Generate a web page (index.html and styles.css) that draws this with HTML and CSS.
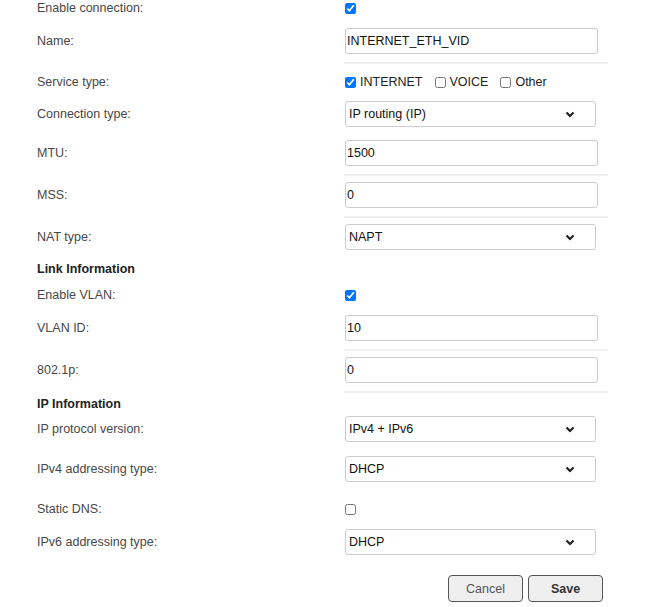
FILE: index.html
```html
<!DOCTYPE html>
<html>
<head>
<meta charset="utf-8">
<link rel="stylesheet" href="styles.css">
</head>
<body>
<form class="form">
  <div class="row row-check">
    <span class="label">Enable connection:</span>
    <div class="field"><input type="checkbox" class="cb" checked></div>
  </div>
  <div class="row row-text mt-14">
    <span class="label">Name:</span>
    <div class="field field-line"><input type="text" class="input" value="INTERNET_ETH_VID"></div>
  </div>
  <div class="row row-line mt-10">
    <span class="label">Service type:</span>
    <div class="field options">
      <label class="opt"><input type="checkbox" class="cb" checked><span>INTERNET</span></label>
      <label class="opt"><input type="checkbox" class="cb"><span>VOICE</span></label>
      <label class="opt"><input type="checkbox" class="cb"><span>Other</span></label>
    </div>
  </div>
  <div class="row row-select mt-11">
    <span class="label">Connection type:</span>
    <div class="field">
      <div class="select-wrap">
        <select class="select"><option>IP routing (IP)</option></select>
        <svg class="chev" width="10" height="7" viewBox="0 0 10 7"><path d="M1.5 1.5 L5 5 L8.5 1.5" fill="none" stroke="#222" stroke-width="2.2"/></svg>
      </div>
    </div>
  </div>
  <div class="row row-text mt-13">
    <span class="label">MTU:</span>
    <div class="field field-line"><input type="text" class="input" value="1500"></div>
  </div>
  <div class="row row-text mt-6">
    <span class="label">MSS:</span>
    <div class="field field-line"><input type="text" class="input" value="0"></div>
  </div>
  <div class="row row-select mt-6">
    <span class="label">NAT type:</span>
    <div class="field">
      <div class="select-wrap">
        <select class="select"><option>NAPT</option></select>
        <svg class="chev" width="10" height="7" viewBox="0 0 10 7"><path d="M1.5 1.5 L5 5 L8.5 1.5" fill="none" stroke="#222" stroke-width="2.2"/></svg>
      </div>
    </div>
  </div>
  <div class="row row-line mt-11">
    <span class="heading">Link Information</span>
  </div>
  <div class="row row-check mt-10">
    <span class="label">Enable VLAN:</span>
    <div class="field"><input type="checkbox" class="cb" checked></div>
  </div>
  <div class="row row-text mt-14">
    <span class="label">VLAN ID:</span>
    <div class="field field-line"><input type="text" class="input" value="10"></div>
  </div>
  <div class="row row-text mt-6">
    <span class="label">802.1p:</span>
    <div class="field field-line"><input type="text" class="input" value="0"></div>
  </div>
  <div class="row row-line mt-3">
    <span class="heading">IP Information</span>
  </div>
  <div class="row row-select mt-4">
    <span class="label">IP protocol version:</span>
    <div class="field">
      <div class="select-wrap">
        <select class="select"><option>IPv4 + IPv6</option></select>
        <svg class="chev" width="10" height="7" viewBox="0 0 10 7"><path d="M1.5 1.5 L5 5 L8.5 1.5" fill="none" stroke="#222" stroke-width="2.2"/></svg>
      </div>
    </div>
  </div>
  <div class="row row-select mt-14">
    <span class="label">IPv4 addressing type:</span>
    <div class="field">
      <div class="select-wrap">
        <select class="select"><option>DHCP</option></select>
        <svg class="chev" width="10" height="7" viewBox="0 0 10 7"><path d="M1.5 1.5 L5 5 L8.5 1.5" fill="none" stroke="#222" stroke-width="2.2"/></svg>
      </div>
    </div>
  </div>
  <div class="row row-check mt-19">
    <span class="label">Static DNS:</span>
    <div class="field"><input type="checkbox" class="cb"></div>
  </div>
  <div class="row row-select mt-14">
    <span class="label">IPv6 addressing type:</span>
    <div class="field">
      <div class="select-wrap">
        <select class="select"><option>DHCP</option></select>
        <svg class="chev" width="10" height="7" viewBox="0 0 10 7"><path d="M1.5 1.5 L5 5 L8.5 1.5" fill="none" stroke="#222" stroke-width="2.2"/></svg>
      </div>
    </div>
  </div>
  <div class="row row-buttons mt-20">
    <span></span>
    <div class="field buttons">
      <button type="button" class="btn btn-cancel">Cancel</button>
      <button type="button" class="btn btn-save">Save</button>
    </div>
  </div>
</form>
</body>
</html>
```

FILE: styles.css
```css
html, body {
  margin: 0;
  padding: 0;
  background: #ffffff;
}

body {
  font-family: "Liberation Sans", Arial, sans-serif;
  font-size: 12.5px;
  color: #444444;
}

.form {
  display: flex;
  flex-direction: column;
  padding-left: 37px;
  width: 623px;
}

.row {
  display: grid;
  grid-template-columns: 307px 1fr;
  align-items: center;
}

.row-check { height: 14px; }
.row-line { height: 16px; }
.row-select { height: 26px; }
.row-buttons { height: 27px; }
.row-text { align-items: start; }

.mt-3 { margin-top: 3px; }
.mt-4 { margin-top: 4px; }
.mt-6 { margin-top: 6px; }
.mt-10 { margin-top: 10px; }
.mt-11 { margin-top: 11px; }
.mt-13 { margin-top: 13px; }
.mt-14 { margin-top: 14px; }
.mt-19 { margin-top: 19px; }
.mt-20 { margin-top: 20px; }

.label {
  color: #474747;
  line-height: 16px;
  white-space: nowrap;
}

.row-text .label {
  line-height: 26px;
}

.heading {
  font-weight: bold;
  color: #222222;
  line-height: 16px;
  white-space: nowrap;
}

.field {
  display: flex;
  align-items: center;
}

.field-line {
  width: 264px;
  padding-bottom: 8px;
  border-bottom: 2px solid #eff0f0;
}

.cb {
  width: 11px;
  height: 11px;
  margin: 0 0 0 1px;
}

.input {
  box-sizing: border-box;
  width: 253px;
  height: 26px;
  margin: 0 0 0 1px;
  padding: 0 0 0 1px;
  border: 1px solid #cccccc;
  border-radius: 3px;
  font-family: "Liberation Sans", Arial, sans-serif;
  font-size: 12.5px;
  color: #111111;
  background: #ffffff;
  outline: none;
}

.options {
  gap: 11px;
}

.opt {
  display: flex;
  align-items: center;
  gap: 4px;
  color: #222222;
}

.select-wrap {
  position: relative;
  margin-left: 1px;
  width: 251px;
  height: 26px;
}

.select {
  appearance: none;
  -webkit-appearance: none;
  box-sizing: border-box;
  width: 251px;
  height: 26px;
  margin: 0;
  padding: 0 0 0 3px;
  border: 1px solid #cccccc;
  border-radius: 3px;
  background: #ffffff;
  font-family: "Liberation Sans", Arial, sans-serif;
  font-size: 12.5px;
  color: #111111;
  outline: none;
}

.chev {
  position: absolute;
  right: 21px;
  top: 10px;
  pointer-events: none;
}

.buttons {
  width: 259px;
  justify-content: flex-end;
  gap: 5px;
}

.btn {
  box-sizing: border-box;
  width: 75px;
  height: 27px;
  margin: 0;
  padding: 0;
  border: 1px solid #555555;
  border-radius: 4px;
  background: #efefef;
  font-family: "Liberation Sans", Arial, sans-serif;
  font-size: 12.5px;
}

.btn-cancel {
  color: #555555;
}

.btn-save {
  color: #333333;
  font-weight: bold;
}
```
